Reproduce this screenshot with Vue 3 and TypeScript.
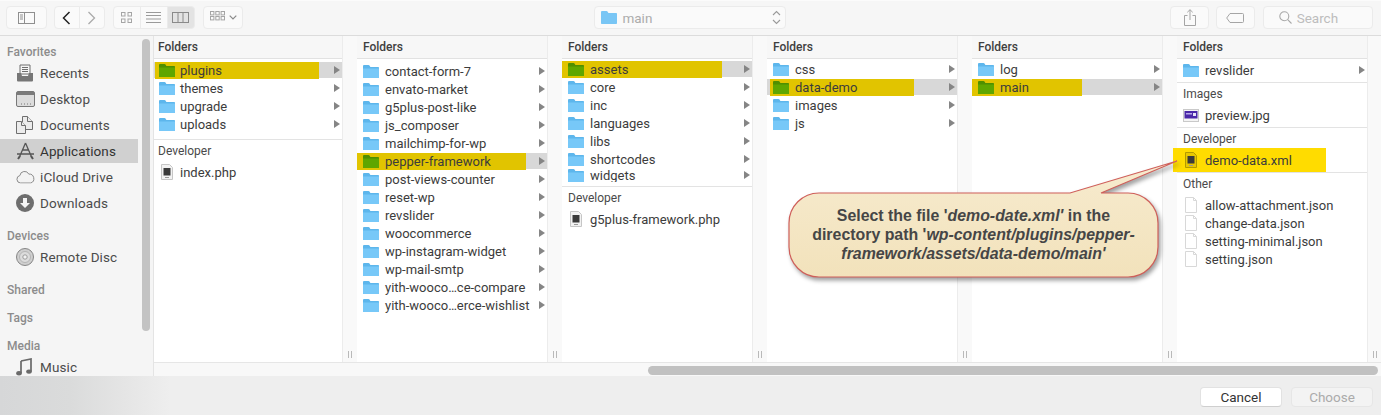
<script setup lang="ts">
type Kind = 'folder' | 'php' | 'file' | 'image'
interface Row { name: string; kind: Kind; arrow?: boolean; sel?: boolean; mark?: number; bright?: boolean; clip?: boolean; inset?: boolean }
interface Section { label?: string; cls: string; rows: Row[] }
interface Column { cls: string; sections: Section[] }

const f = (name: string, extra: Partial<Row> = {}): Row => ({ name, kind: 'folder', arrow: true, ...extra })
const k = (name: string, kind: Kind, extra: Partial<Row> = {}): Row => ({ name, kind, ...extra })

const columns: Column[] = [
  {
    cls: 'first',
    sections: [
      { cls: 'pad-a', rows: [f('plugins', { sel: true, mark: 164 }), f('themes'), f('upgrade'), f('uploads')] },
      { label: 'Developer', cls: 'pad-file', rows: [k('index.php', 'php')] },
    ],
  },
  {
    cls: '',
    sections: [
      {
        cls: 'pad-b',
        rows: [
          f('contact-form-7'), f('envato-market'), f('g5plus-post-like'), f('js_composer'), f('mailchimp-for-wp'),
          f('pepper-framework', { sel: true, mark: 169 }), f('post-views-counter'), f('reset-wp'), f('revslider'),
          f('woocommerce'), f('wp-instagram-widget'), f('wp-mail-smtp'), f('yith-wooco…ce-compare'), f('yith-wooco…erce-wishlist'),
        ],
      },
    ],
  },
  {
    cls: '',
    sections: [
      {
        cls: 'pad-c',
        rows: [
          f('assets', { sel: true, mark: 160 }), f('core'), f('inc'), f('languages'), f('libs'), f('shortcodes'),
          f('widgets', { clip: true }),
        ],
      },
      { label: 'Developer', cls: 'pad-file', rows: [k('g5plus-framework.php', 'php')] },
    ],
  },
  {
    cls: '',
    sections: [{ cls: 'pad-d', rows: [f('css'), f('data-demo', { sel: true, mark: 144, inset: true }), f('images'), f('js')] }],
  },
  {
    cls: '',
    sections: [{ cls: 'pad-d', rows: [f('log'), f('main', { sel: true, mark: 110 })] }],
  },
  {
    cls: '',
    sections: [
      { cls: 'pad-e', rows: [f('revslider')] },
      { label: 'Images', cls: 'pad-file', rows: [k('preview.jpg', 'image')] },
      { label: 'Developer', cls: 'pad-file', rows: [k('demo-data.xml', 'php', { mark: 153, bright: true })] },
      {
        label: 'Other',
        cls: 'pad-file',
        rows: [k('allow-attachment.json', 'file'), k('change-data.json', 'file'), k('setting-minimal.json', 'file'), k('setting.json', 'file')],
      },
    ],
  },
]
</script>

<template>
  <div class="window">
    <header class="toolbar">
      <button class="tb sidebar-btn" aria-label="Sidebar">
        <svg width="17" height="12" viewBox="0 0 17 12"><rect x=".5" y=".5" width="16" height="11" fill="none" stroke="#8f8f8f" /><path d="M6.500 0v12M2 3h3M2 5h3M2 7h3" stroke="#8f8f8f" fill="none" /></svg>
      </button>
      <div class="group nav">
        <button class="tb seg" aria-label="Back">
          <svg width="9" height="14" viewBox="0 0 9 14"><path d="M7.500 1 1.500 7l6 6" fill="none" stroke="#222" stroke-width="1.500" /></svg>
        </button>
        <button class="tb seg" aria-label="Forward">
          <svg width="9" height="14" viewBox="0 0 9 14"><path d="M1.500 1l6 6-6 6" fill="none" stroke="#aaa" stroke-width="1.300" /></svg>
        </button>
      </div>
      <div class="group views">
        <button class="tb seg" aria-label="Icons">
          <svg width="11" height="11" viewBox="0 0 11 11" fill="none" stroke="#a5a5a5"><rect x=".5" y=".5" width="3.500" height="3.500" /><rect x="7" y=".5" width="3.500" height="3.500" /><rect x=".5" y="7" width="3.500" height="3.500" /><rect x="7" y="7" width="3.500" height="3.500" /></svg>
        </button>
        <button class="tb seg" aria-label="List">
          <svg width="15" height="11" viewBox="0 0 15 11" fill="none" stroke="#9a9a9a"><path d="M0 .5h15M0 3.500h15M0 7h15M0 10.500h15" /></svg>
        </button>
        <button class="tb seg active" aria-label="Columns">
          <svg width="17" height="11" viewBox="0 0 17 11" fill="none" stroke="#8a8a8a"><rect x=".5" y=".5" width="16" height="10" /><path d="M6 0v11M11 0v11" /></svg>
        </button>
      </div>
      <button class="tb arrange" aria-label="Arrange">
        <svg width="15" height="13" viewBox="0 0 15 13" fill="none" stroke="#a5a5a5"><rect x=".5" y=".5" width="3.400" height="3.400" /><rect x="5.800" y=".5" width="3.400" height="3.400" /><rect x="11.100" y=".5" width="3.400" height="3.400" /><rect x=".5" y="5.500" width="3.400" height="3.400" /><rect x="5.800" y="5.500" width="3.400" height="3.400" /><rect x="11.100" y="5.500" width="3.400" height="3.400" /></svg>
        <svg width="8" height="5" viewBox="0 0 8 5"><path d="M.7.7 4 4l3.300-3.300" fill="none" stroke="#8a8a8a" stroke-width="1.200" /></svg>
      </button>
      <div class="path">
        <svg class="folder" width="16" height="13" viewBox="0 0 16 13"><path d="M0 1.200C0 .5.500 0 1.200 0h4.300c.5 0 .8.200 1 .5L7.400 2H15c.6 0 1 .4 1 1v9c0 .6-.4 1-1 1H1c-.6 0-1-.4-1-1z" fill="#79c6f5" /></svg>
        <span class="path-name">main</span>
        <svg class="updown" width="9" height="15" viewBox="0 0 9 15" fill="none" stroke="#9a9a9a" stroke-width="1.100"><path d="M1 5l3.500-3.500L8 5M1 10l3.500 3.500L8 10" /></svg>
      </div>
      <button class="tb action" aria-label="Share">
        <svg width="12" height="17" viewBox="0 0 12 17" fill="none" stroke="#a5a5a5"><path d="M3.500 6.500H.5v10h11v-10h-3M6 11V.8M3.300 3.300 6 .7l2.700 2.600" /></svg>
      </button>
      <button class="tb action tag" aria-label="Tag">
        <svg width="18" height="10" viewBox="0 0 18 10" fill="none" stroke="#a5a5a5"><path d="M4 .5h12.500a1 1 0 0 1 1 1v7a1 1 0 0 1-1 1H4L.7 5z" /></svg>
      </button>
      <div class="search">
        <svg width="13" height="13" viewBox="0 0 13 13" fill="none" stroke="#a8a8a8" stroke-width="1.100"><circle cx="5.300" cy="5.300" r="4.500" /><path d="m8.700 8.700 3.800 3.800" /></svg>
        <span>Search</span>
      </div>
    </header>

    <div class="middle">
      <aside class="sidebar">
        <div class="scrollbar"></div>
        <div class="side-label first-label">Favorites</div>
        <div class="side-row">
          <svg width="18" height="18" viewBox="0 0 18 18"><path d="M4 1h10v9H4z" fill="#f5f5f5" stroke="#6f6f6f" /><path d="M6 3.500h6M6 5.500h6M6 7.500h6" stroke="#6f6f6f" /><path d="M1 9h4l1 3h6l1-3h4v7.500a1 1 0 0 1-1 1H2a1 1 0 0 1-1-1z" fill="#767676" /></svg>
          <span>Recents</span>
        </div>
        <div class="side-row">
          <svg width="19" height="16" viewBox="0 0 19 16"><rect x=".5" y=".5" width="18" height="15" rx="1.500" fill="#dcdcdc" stroke="#787878" /><path d="M1 1h17v3H1z" fill="#7b7b7b" /><path d="M5 13h1M8 13h1M11 13h1M14 13h1" stroke="#777" /></svg>
          <span>Desktop</span>
        </div>
        <div class="side-row">
          <svg width="17" height="18" viewBox="0 0 17 18" fill="#ececec" stroke="#6f6f6f"><path d="M6.500.5h5l5 5v8h-10z" /><path d="M11.500.5v5h5" /><path d="M.5 5.500h5l4 4v8h-9z" /><path d="M5.500 5.500v4h4" /></svg>
          <span>Documents</span>
        </div>
        <div class="side-row selected">
          <svg width="19" height="18" viewBox="0 0 19 18" fill="none" stroke="#555" stroke-width="1.300"><path d="M9.500 1 3 16M9.500 1 16 16M1 12h17M6 8h7" /><path d="M2 17l2-3M17 17l-2-3" stroke-width="2" /></svg>
          <span class="dark">Applications</span>
        </div>
        <div class="side-row">
          <svg width="19" height="13" viewBox="0 0 19 13"><path d="M4.500 12.500a3.800 3.800 0 0 1-.6-7.500A4.700 4.700 0 0 1 12.800 3.600 4.600 4.600 0 0 1 14.800 12.500z" fill="#f3f3f3" stroke="#8a8a8a" /></svg>
          <span>iCloud Drive</span>
        </div>
        <div class="side-row">
          <svg width="18" height="18" viewBox="0 0 18 18"><circle cx="9" cy="9" r="9" fill="#6e6e6e" /><path d="M7 4h4v5h3l-5 5-5-5h3z" fill="#f5f5f5" /></svg>
          <span>Downloads</span>
        </div>
        <div class="side-label">Devices</div>
        <div class="side-row">
          <svg width="18" height="18" viewBox="0 0 18 18"><circle cx="9" cy="9" r="8.500" fill="#cfcfcf" stroke="#858585" /><circle cx="9" cy="9" r="5.500" fill="#dcdcdc" stroke="#b5b5b5" /><circle cx="9" cy="9" r="2.200" fill="#f2f2f2" stroke="#9a9a9a" /></svg>
          <span>Remote Disc</span>
        </div>
        <div class="side-label">Shared</div>
        <div class="side-label">Tags</div>
        <div class="side-label">Media</div>
        <div class="side-row">
          <svg width="16" height="18" viewBox="0 0 16 18"><path d="M5 3 15 1v12.500" fill="none" stroke="#6a6a6a" stroke-width="1.700" /><path d="M5 3v12" fill="none" stroke="#6a6a6a" stroke-width="1.700" /><ellipse cx="3" cy="15.300" rx="2.800" ry="2.200" fill="#6a6a6a" /><ellipse cx="13" cy="13.600" rx="2.800" ry="2.200" fill="#6a6a6a" /></svg>
          <span>Music</span>
        </div>
      </aside>

      <div class="browser">
        <div class="columns">
          <section v-for="(col, i) in columns" :key="i" class="col" :class="col.cls">
            <div class="col-body">
              <div class="col-head">Folders</div>
              <div v-for="(sec, j) in col.sections" :key="j" class="sec" :class="[sec.cls, { ruled: j > 0 }]">
                <div v-if="sec.label" class="sec-label">{{ sec.label }}</div>
                <div v-for="row in sec.rows" :key="row.name" class="row" :class="{ sel: row.sel, clip: row.clip }">
                  <div class="item" :class="{ mark: row.mark, bright: row.bright, inset: row.inset }" :style="row.mark ? { width: row.mark + 'px' } : undefined">
                    <svg v-if="row.kind === 'folder'" class="ico" width="16" height="13" viewBox="0 0 16 13">
                      <path class="f-back" d="M0 1.200C0 .5.500 0 1.200 0h4.300c.5 0 .8.200 1 .5L7.400 2H15c.6 0 1 .4 1 1v9c0 .6-.4 1-1 1H1c-.6 0-1-.4-1-1z" />
                      <path class="f-front" d="M0 3.500h16V12c0 .6-.4 1-1 1H1c-.6 0-1-.4-1-1z" />
                    </svg>
                    <svg v-else-if="row.kind === 'php'" class="ico doc" width="16" height="16" viewBox="0 0 16 16">
                      <path class="d-page" d="M2.500.5h8l3 3v12h-11z" />
                      <rect x="4.500" y="4" width="7" height="7.500" fill="#3a3a3a" />
                      <path d="M6 13.500h4" stroke="#999" />
                    </svg>
                    <svg v-else-if="row.kind === 'image'" class="ico" width="16" height="13" viewBox="0 0 16 13">
                      <rect x=".5" y=".5" width="15" height="12" fill="#f4f4f4" stroke="#c9c9c9" />
                      <rect x="1.500" y="2" width="13" height="7.500" fill="#4a28a8" />
                      <rect x="3" y="4" width="6" height="1.500" fill="#b7a8ea" />
                      <rect x="10" y="4" width="3" height="3" fill="#e8e4f7" />
                    </svg>
                    <svg v-else class="ico" width="16" height="16" viewBox="0 0 16 16">
                      <path d="M2.500.5h8l3 3v12h-11z" fill="#fff" stroke="#d8d8d8" />
                      <path d="M10.500.5v3h3" fill="none" stroke="#d8d8d8" />
                    </svg>
                    <span class="name">{{ row.name }}</span>
                  </div>
                  <i v-if="row.arrow" class="arrow"></i>
                </div>
              </div>
            </div>
            <div class="grip"><b></b><b></b></div>
          </section>
        </div>
        <div class="hscroll"><div class="thumb"></div></div>
      </div>
    </div>

    <footer class="footer">
      <button class="btn">Cancel</button>
      <button class="btn off">Choose</button>
    </footer>

    <div class="callout">
      <svg class="bubble" width="410" height="140" viewBox="0 0 410 140">
        <defs>
          <linearGradient id="bub" x1="0" y1="0" x2="0" y2="1">
            <stop offset="0" stop-color="#f7ebcf" />
            <stop offset="1" stop-color="#f2e2bb" />
          </linearGradient>
        </defs>
        <path d="M39 43H290L397 11 321 43H348A30 30 0 0 1 378 73V97A30 30 0 0 1 348 127H39A30 30 0 0 1 9 97V73A30 30 0 0 1 39 43Z" fill="url(#bub)" stroke="#cf5f5a" stroke-width="1.200" />
      </svg>
      <p class="bubble-text">
        Select the file '<em>demo-date.xml'</em> in the<br />
        directory path '<em>wp-content/plugins/pepper-<br />framework/assets/data-demo/main'</em>
      </p>
    </div>
  </div>
</template>

<style scoped>
.window {
  position: relative;
  width: 1381px;
  height: 415px;
  overflow: hidden;
  background: #f6f6f6;
  font-family: Roboto, "Noto Sans", "Liberation Sans", sans-serif;
  font-size: 13px;
  color: #3c3c3c;
  display: flex;
  flex-direction: column;
}
button {
  font: inherit;
  padding: 0;
}

/* toolbar */
.toolbar {
  height: 36px;
  flex: none;
  box-sizing: border-box;
  border-bottom: 1px solid #dcdcdc;
  border-top: 1px solid #fbfbfb;
  background: #f6f6f6;
  display: flex;
  align-items: flex-start;
  padding: 5px 8px 0 6px;
}
.tb {
  height: 23px;
  box-sizing: border-box;
  background: #fafafa;
  border: 1px solid #ebebeb;
  border-radius: 4px;
  display: flex;
  align-items: center;
  justify-content: center;
}
.sidebar-btn { width: 41px; }
.group { display: flex; }
.group .seg { border-radius: 0; margin-left: -1px; }
.group .seg:first-child { border-radius: 4px 0 0 4px; margin-left: 0; }
.group .seg:last-child { border-radius: 0 4px 4px 0; }
.nav { margin-left: 7px; }
.nav .seg { width: 26px; }
.views { margin-left: 8px; }
.views .seg { width: 28px; }
.views .active { background: #e3e3e3; }
.arrange { width: 41px; margin-left: 8px; gap: 4px; }
.path {
  margin-left: 351px;
  width: 193px;
  height: 23px;
  box-sizing: border-box;
  background: #fafafa;
  border: 1px solid #ebebeb;
  border-radius: 4px;
  display: flex;
  align-items: center;
  padding: 0 4px 0 6px;
  color: #acacac;
}
.path-name { margin-left: 5px; font-size: 13.500px; }
.updown { margin-left: auto; }
.action { width: 39px; margin-left: 384px; }
.tag { margin-left: 7px; }
.search {
  margin-left: 8px;
  width: 111px;
  height: 23px;
  box-sizing: border-box;
  background: #fafafa;
  border: 1px solid #ebebeb;
  border-radius: 4px;
  display: flex;
  align-items: center;
  gap: 5px;
  padding-left: 15px;
  color: #bdbdbd;
  font-size: 13.500px;
}

/* middle */
.middle {
  height: 340px;
  flex: none;
  display: flex;
}
.sidebar {
  position: relative;
  width: 154px;
  flex: none;
  box-sizing: border-box;
  border-right: 1px solid #e4e4e4;
  background: #f5f5f5;
  overflow: hidden;
  padding-top: 5px;
}
.scrollbar {
  position: absolute;
  left: 142px;
  top: 3px;
  width: 8px;
  height: 292px;
  border-radius: 4px;
  background: #c3c3c3;
}
.side-label {
  height: 20px;
  line-height: 22px;
  padding-left: 7px;
  margin: 9px 0 -1px;
  font-size: 12px;
  font-weight: 500;
  color: #8c8c8c;
}
.first-label { margin-top: 0; }
.side-row {
  height: 26px;
  width: 138px;
  display: flex;
  align-items: center;
  box-sizing: border-box;
  position: relative;
  padding-left: 40px;
  font-size: 13.500px;
  letter-spacing: .1px;
  color: #4c4c4c;
}
.side-row svg {
  position: absolute;
  left: 16px;
  top: 50%;
  transform: translateY(-50%);
}
.selected {
  height: 24px;
  margin: 1px 0;
  background: #d0d0d0;
}
.dark { color: #333; }

/* columns */
.browser {
  flex: 1;
  min-width: 0;
  display: flex;
  flex-direction: column;
}
.columns {
  height: 326px;
  display: flex;
  overflow: hidden;
}
.col {
  width: 205px;
  flex: none;
  display: flex;
}
.col.first { width: 203px; }
.col-body {
  width: 190px;
  flex: none;
  background: #fff;
}
.first .col-body { width: 188px; }
.col-head {
  height: 23px;
  line-height: 22px;
  box-sizing: border-box;
  border-bottom: 1px solid #e2e2e2;
  background: #f7f7f7;
  padding-left: 6px;
  font-size: 12px;
  font-weight: 500;
  color: #3f3f3f;
}
.first .col-head { padding-left: 4px; }
.grip {
  width: 15px;
  flex: none;
  box-sizing: border-box;
  background: #f9f9f9;
  border-left: 1px solid #ececec;
  display: flex;
  align-items: flex-end;
  justify-content: center;
  gap: 2px;
  padding-bottom: 4px;
}
.grip b {
  width: 1px;
  height: 7px;
  background: #b9b9b9;
}
.ruled { border-top: 1px solid #e3e3e3; }
.pad-a { padding: 2px 0 6px; }
.pad-b { padding-top: 3px; }
.pad-c { padding: 1px 0 4px; }
.pad-d { padding-top: 1px; }
.pad-e { padding: 2px 0 3px; }
.pad-file { padding-bottom: 3px; }
.sec-label {
  height: 23px;
  line-height: 23px;
  padding-left: 6px;
  font-size: 12px;
  color: #4a4a4a;
}
.first .sec-label { padding-left: 4px; }
.row {
  height: 18px;
  display: flex;
  align-items: center;
  padding-left: 6px;
}
.first .row { padding-left: 5px; }
.row.clip { height: 14px; overflow: hidden; }
.row.sel { background: linear-gradient(#fff 1px, #d8d8d8 1px, #d8d8d8 17px, #fff 17px); }
.item {
  display: flex;
  align-items: center;
  gap: 6px;
  flex: none;
  box-sizing: border-box;
}
.first .item { gap: 5px; }
.ico { flex: none; }
.name { white-space: nowrap; }
.mark {
  height: 17px;
  margin-left: -6px;
  padding-left: 6px;
  background: #e1c400;
}
.first .mark { margin-left: -4px; padding-left: 4px; }
.mark.inset { margin-left: -3px; padding-left: 3px; }
.mark.bright {
  height: 24px;
  margin-left: -10px;
  padding-left: 10px;
  background: #ffdc00;
}
.f-back { fill: #5db6ec; }
.f-front { fill: #77c8f8; }
.mark .f-back { fill: #4f8f00; }
.mark .f-front { fill: #5fa600; }
.d-page { fill: #f2f2f2; stroke: #c6c6c6; }
.bright .d-page { fill: #e8c800; stroke: #b39a00; }
.arrow {
  margin-left: auto;
  margin-right: 2px;
  width: 0;
  height: 0;
  border-left: 6px solid #858585;
  border-top: 4px solid transparent;
  border-bottom: 4px solid transparent;
}
.hscroll {
  height: 14px;
  box-sizing: border-box;
  border-top: 1px solid #e6e6e6;
  background: #f8f8f8;
  display: flex;
  justify-content: flex-end;
  padding: 3px 3px 0 0;
}
.thumb {
  width: 730px;
  height: 9px;
  border-radius: 5px;
  background: #c1c1c1;
}

/* footer */
.footer {
  height: 39px;
  flex: none;
  display: flex;
  justify-content: flex-end;
  gap: 9px;
  padding: 11px 8px 0 0;
  box-sizing: border-box;
  background: linear-gradient(90deg, #d6d7d8 0, #dadbdb 70px, #e5e5e5 125px, #eeeeee 170px);
}
.btn {
  width: 82px;
  height: 20px;
  box-sizing: border-box;
  border: 1px solid #e2e2e2;
  border-bottom-color: #cfcfcf;
  border-radius: 4px;
  background: #fff;
  color: #333;
  font-size: 13.500px;
}
.btn.off {
  background: #f3f3f3;
  border-color: #e6e6e6;
  color: #ababab;
}

/* annotation */
.callout {
  position: absolute;
  left: 780px;
  top: 150px;
  width: 410px;
  height: 140px;
}
.bubble {
  display: block;
  filter: drop-shadow(2px 3px 2px rgba(0, 0, 0, .38));
}
.bubble-text {
  position: absolute;
  left: 9px;
  top: 56px;
  width: 369px;
  margin: 0;
  text-align: center;
  font-family: "Liberation Sans", Arial, sans-serif;
  font-size: 15.900px;
  font-weight: 700;
  line-height: 19px;
  color: #464646;
}
</style>
